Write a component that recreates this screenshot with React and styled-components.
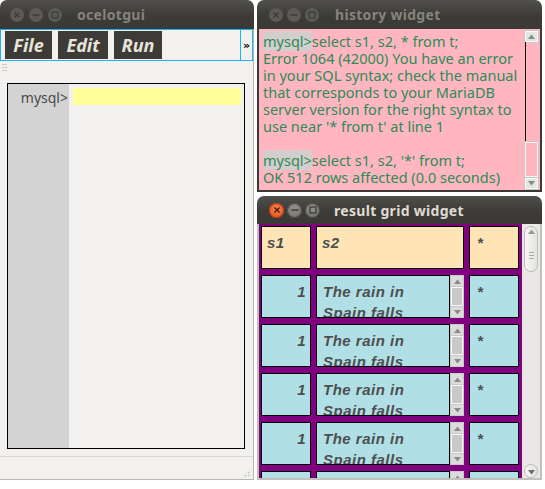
import React from "react";
import styled, { createGlobalStyle, css } from "styled-components";

const GlobalStyle = createGlobalStyle`
  html, body {
    margin: 0;
    padding: 0;
    background: #ffffff;
  }
  body {
    font-family: "Noto Sans", "DejaVu Sans", sans-serif;
  }
`;

const Desktop = styled.div`
  display: flex;
  gap: 3px;
  width: 545px;
  height: 489px;
  overflow: hidden;
`;

const Column = styled.div`
  display: flex;
  flex-direction: column;
  gap: 4px;
  width: 285px;
`;

const Window = styled.div`
  display: flex;
  flex-direction: column;
  height: ${(p) => p.$height}px;
  width: ${(p) => (p.$width ? `${p.$width}px` : "auto")};
  border-radius: 7px 7px 0 0;
  overflow: hidden;
  background: #f2f1f0;
  flex-shrink: 0;
`;

// title bar, ubuntu ambiance look
const TitleBar = styled.div`
  display: flex;
  align-items: center;
  height: ${(p) => p.$height || 29}px;
  flex-shrink: 0;
  padding-left: ${(p) => p.$pad || 10}px;
  background: linear-gradient(#504f4b, #3c3b37 55%, #3a3935);
`;

const Buttons = styled.div`
  display: flex;
  gap: ${(p) => p.$gap || 4}px;
`;

const WinButton = styled.span`
  display: flex;
  align-items: center;
  justify-content: center;
  width: ${(p) => p.$size}px;
  height: ${(p) => p.$size}px;
  border-radius: 50%;
  background: #5b5a56;
  ${(p) =>
    p.$active &&
    css`
      background: radial-gradient(circle at 50% 35%, #92918c, #6c6b66);
      box-shadow: inset 0 0 0 1px #4a4945;
    `}
  ${(p) =>
    p.$active &&
    p.$close &&
    css`
      background: radial-gradient(circle at 50% 35%, #f7844f, #dc4814);
      box-shadow: inset 0 0 0 1px #b93d10;
    `}
`;

const Title = styled.span`
  margin-left: ${(p) => p.$gap || 15}px;
  font-family: "Noto Sans", "DejaVu Sans", sans-serif;
  font-weight: bold;
  font-size: 14px;
  letter-spacing: 0.3px;
  color: ${(p) => (p.$active ? "#dfdbd2" : "#85837d")};
`;

const CloseGlyph = ({ color }) => (
  <svg width="8" height="8" viewBox="0 0 8 8">
    <path d="M1.5 1.5 L6.5 6.5 M6.5 1.5 L1.5 6.5" stroke={color} strokeWidth="1.4" />
  </svg>
);

const MinGlyph = ({ color }) => (
  <svg width="8" height="8" viewBox="0 0 8 8">
    <path d="M0.5 4 L7.5 4" stroke={color} strokeWidth="1.4" />
  </svg>
);

const MaxGlyph = ({ color }) => (
  <svg width="8" height="8" viewBox="0 0 8 8">
    <rect x="1" y="1" width="6" height="6" fill="none" stroke={color} strokeWidth="1.2" />
  </svg>
);

const WindowControls = ({ active, size, gap }) => {
  const ink = active ? "#3a3935" : "#3d3c38";
  return (
    <Buttons $gap={gap}>
      <WinButton $size={size} $active={active} $close>
        <CloseGlyph color={active ? "#4a1a06" : ink} />
      </WinButton>
      <WinButton $size={size} $active={active}>
        <MinGlyph color={ink} />
      </WinButton>
      <WinButton $size={size} $active={active}>
        <MaxGlyph color={ink} />
      </WinButton>
    </Buttons>
  );
};

/* ---------- left window: ocelotgui ---------- */

const MainBody = styled.div`
  flex: 1;
  display: flex;
  flex-direction: column;
  border-right: 1px solid #b7b5b0;
  border-bottom: 1px solid #b7b5b0;
`;

const MenuBar = styled.div`
  display: flex;
  align-items: center;
  gap: 6px;
  height: 32px;
  box-sizing: border-box;
  padding: 0 0 0 4px;
  border: 1px solid #19b5ec;
`;

const MenuButton = styled.span`
  display: flex;
  align-items: center;
  justify-content: center;
  width: ${(p) => p.$width}px;
  height: 28px;
  background: #3c3b37;
  color: #e8e4da;
  font-family: "Noto Sans", "DejaVu Sans", sans-serif;
  font-weight: bold;
  font-style: italic;
  font-size: 18px;
`;

const Chevron = styled.span`
  margin-left: auto;
  display: flex;
  align-items: center;
  justify-content: center;
  width: 11px;
  height: 30px;
  border: 1px solid #19b5ec;
  border-right-width: 0;
  font-family: "DejaVu Sans", sans-serif;
  font-weight: bold;
  font-size: 11px;
  color: #000;
`;

const GripRow = styled.div`
  height: 22px;
  padding: 3px 0 0 2px;
  box-sizing: border-box;
`;

const Grip = styled.span`
  display: block;
  width: 5px;
  height: 8px;
  background: repeating-linear-gradient(#cfcdc8 0 1px, transparent 1px 3px);
`;

const Editor = styled.div`
  display: flex;
  margin-left: 7px;
  width: 238px;
  height: 366px;
  box-sizing: border-box;
  border: 1px solid #000;
  background: #f2f1f0;
`;

const Gutter = styled.div`
  width: 61px;
  background: #d3d3d3;
  text-align: right;
  padding: 5px 1px 0 0;
  box-sizing: border-box;
  font-family: "Noto Sans", "DejaVu Sans", sans-serif;
  font-size: 14px;
  line-height: 18px;
  color: #4a4a4a;
`;

const Prompt = styled.div`
  flex: 1;
  padding: 4px 3px 0 4px;
`;

const PromptInput = styled.div`
  height: 17px;
  background: #ffff99;
`;

const StatusBar = styled.div`
  display: flex;
  justify-content: flex-end;
  align-items: flex-end;
  height: 21px;
  margin-top: auto;
  border-top: 1px solid #d8d7d3;
  padding: 0 2px 1px 0;
`;

const SizeGrip = styled.span`
  width: 10px;
  height: 10px;
  background-image: radial-gradient(circle, #c4c2bd 0.8px, transparent 1.1px);
  background-size: 3px 3px;
  clip-path: polygon(100% 0, 100% 100%, 0 100%);
`;

/* ---------- history widget ---------- */

const HistoryPane = styled.div`
  flex: 1;
  display: flex;
  background: #ffb6c1;
  border: 2px solid #3a3935;
  border-top: 0;
`;

const HistoryText = styled.div`
  flex: 1;
  padding: 4px 0 0 4px;
  font-family: "Noto Sans", "DejaVu Sans", sans-serif;
  font-size: 14.5px;
  line-height: 17px;
  color: #2e8b57;
`;

const HistoryLine = styled.div`
  white-space: nowrap;
  height: 17px;
`;

const PromptMark = styled.span`
  background: #d3cdce;
`;

const VScroll = styled.div`
  display: flex;
  flex-direction: column;
  width: ${(p) => p.$width}px;
  flex-shrink: 0;
  padding: ${(p) => p.$pad || "0"};
  box-sizing: border-box;
`;

const ArrowButton = styled.span`
  display: flex;
  align-items: center;
  justify-content: center;
  height: ${(p) => p.$height}px;
  flex-shrink: 0;
  box-sizing: border-box;
  background: #e6e4e1;
  border: 1px solid #fafafa;
  box-shadow: 0 0 0 1px #c9c7c3;
`;

const Track = styled.span`
  flex: ${(p) => p.$grow};
  border-left: 1px solid ${(p) => p.$line};
  ${(p) =>
    p.$handle &&
    css`
      border: 1px solid #f4f4f4;
      box-shadow: 0 0 0 1px #c9c7c3;
      margin: 1px 0;
    `}
`;

const Triangle = ({ up, color = "#7f8f86" }) => (
  <svg width="7" height="5" viewBox="0 0 7 5">
    <path d={up ? "M0 5 L3.5 0.5 L7 5 Z" : "M0 0 L3.5 4.5 L7 0 Z"} fill={color} />
  </svg>
);

/* ---------- result grid widget ---------- */

const ResultPane = styled.div`
  flex: 1;
  display: flex;
  min-height: 0;
  border: 2px solid #c2c0bb;
  border-top: 0;
`;

const GridArea = styled.div`
  flex: 1;
  display: grid;
  grid-template-columns: 50px 148px 50px;
  grid-auto-rows: 43px;
  column-gap: 5px;
  row-gap: 6px;
  padding: 2px 0 0 2px;
  background: #800080;
  overflow: hidden;
`;

const Cell = styled.div`
  box-sizing: border-box;
  border: 1px solid #000;
  background: ${(p) => (p.$header ? "#ffe4b5" : "#b0e0e6")};
  padding: 5px ${(p) => (p.$right ? "4px" : "6px")} 0 ${(p) => (p.$star ? "7px" : "5px")};
  text-align: ${(p) => (p.$right ? "right" : "left")};
  font-family: "Liberation Sans", "DejaVu Sans", sans-serif;
  font-weight: bold;
  font-style: italic;
  font-size: 15px;
  letter-spacing: 0.5px;
  line-height: 22px;
  color: #4e4e4e;
  overflow: hidden;
`;

const TextCell = styled.div`
  display: flex;
  min-height: 0;
`;

const TextBody = styled(Cell)`
  flex: 1;
  padding-left: 6px;
  line-height: 21px;
`;

const MiniScroll = styled.div`
  display: flex;
  flex-direction: column;
  width: 14px;
  background: #c9c9c9;
  padding: 1px;
  box-sizing: border-box;
`;

const MiniArrow = styled.span`
  display: flex;
  align-items: center;
  justify-content: center;
  height: 10px;
  background: #dcdcdc;
`;

const MiniTrack = styled.span`
  flex: 1;
  margin: 1px 0;
  background: #c9c9c9;
  border: 1px solid #f7f7f7;
`;

const GridScroll = styled.div`
  display: flex;
  flex-direction: column;
  width: 18px;
  background: #e9e8e6;
  padding: 2px 2px 0 2px;
  box-sizing: border-box;
`;

const Thumb = styled.span`
  display: flex;
  flex-direction: column;
  align-items: center;
  justify-content: ${(p) => (p.$end ? "flex-end" : "space-between")};
  height: ${(p) => p.$height}px;
  border: 1px solid #bdbbb7;
  border-radius: 7px;
  background: linear-gradient(90deg, #f7f7f6, #e4e3e1);
  padding: 2px 0;
  box-sizing: border-box;
`;

const GripLines = styled.span`
  width: 5px;
  height: 7px;
  margin-bottom: 10px;
  background: repeating-linear-gradient(#a9a7a3 0 1px, transparent 1px 3px);
`;

const history = [
  { prompt: true, text: "select s1, s2, * from t;" },
  { text: "Error 1064 (42000) You have an error" },
  { text: "in your SQL syntax; check the manual" },
  { text: "that corresponds to your MariaDB" },
  { text: "server version for the right syntax to" },
  { text: "use near '* from t' at line 1" },
  { text: "" },
  { prompt: true, text: "select s1, s2, '*' from t;" },
  { text: "OK 512 rows affected (0.0 seconds)" },
];

const rows = [1, 2, 3, 4, 5];

const App = () => {
  return (
    <Desktop>
      <GlobalStyle />

      <Window $width={254} $height={480}>
        <TitleBar>
          <WindowControls size={14} gap={5} />
          <Title>ocelotgui</Title>
        </TitleBar>
        <MainBody>
          <MenuBar>
            <MenuButton $width={47}>File</MenuButton>
            <MenuButton $width={50}>Edit</MenuButton>
            <MenuButton $width={48}>Run</MenuButton>
            <Chevron>»</Chevron>
          </MenuBar>
          <GripRow>
            <Grip />
          </GripRow>
          <Editor>
            <Gutter>mysql&gt;</Gutter>
            <Prompt>
              <PromptInput />
            </Prompt>
          </Editor>
          <StatusBar>
            <SizeGrip />
          </StatusBar>
        </MainBody>
      </Window>

      <Column>
        <Window $height={192}>
          <TitleBar $pad={12}>
            <WindowControls size={14} gap={4} />
            <Title $gap={16}>history widget</Title>
          </TitleBar>
          <HistoryPane>
            <HistoryText>
              {history.map((line, i) => (
                <HistoryLine key={i}>
                  {line.prompt && <PromptMark>mysql&gt;</PromptMark>}
                  {line.text}
                </HistoryLine>
              ))}
            </HistoryText>
            <VScroll $width={16} $pad="2px 2px 1px 1px">
              <ArrowButton $height={11}>
                <Triangle up />
              </ArrowButton>
              <Track $grow={3} $line="#000" />
              <Track $grow={1} $line="#000" $handle />
              <ArrowButton $height={11}>
                <Triangle />
              </ArrowButton>
            </VScroll>
          </HistoryPane>
        </Window>

        <Window $height={284}>
          <TitleBar $height={28} $pad={12}>
            <WindowControls active size={15} gap={3} />
            <Title $active $gap={14}>result grid widget</Title>
          </TitleBar>
          <ResultPane>
            <GridArea>
              <Cell $header>s1</Cell>
              <Cell $header>s2</Cell>
              <Cell $header $star>*</Cell>
              {rows.map((r) => (
                <React.Fragment key={r}>
                  <Cell $right>1</Cell>
                  <TextCell>
                    <TextBody>
                      The rain in
                      <br />
                      Spain falls
                    </TextBody>
                    <MiniScroll>
                      <MiniArrow>
                        <Triangle up color="#8a8a8a" />
                      </MiniArrow>
                      <MiniTrack />
                      <MiniArrow>
                        <Triangle color="#8a8a8a" />
                      </MiniArrow>
                    </MiniScroll>
                  </TextCell>
                  <Cell $star>*</Cell>
                </React.Fragment>
              ))}
            </GridArea>
            <GridScroll>
              <Thumb $height={46}>
                <Triangle up color="#9a9893" />
                <GripLines />
              </Thumb>
              <span style={{ flex: 1 }} />
              <Thumb $height={14} $end>
                <Triangle color="#6e6c68" />
              </Thumb>
            </GridScroll>
          </ResultPane>
        </Window>
      </Column>
    </Desktop>
  );
};

export default App;
